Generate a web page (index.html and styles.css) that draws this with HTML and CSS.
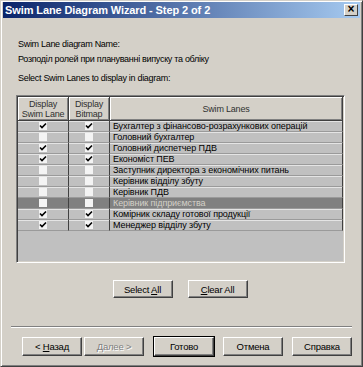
FILE: index.html
```html
<!DOCTYPE html>
<html lang="uk">
<head>
  <meta charset="UTF-8" />
  <title>Swim Lane Diagram Wizard - Step 2 of 2</title>
  <link rel="stylesheet" href="styles.css">
</head>
<body>
  <div class="window">
    <div class="titlebar">
      <span class="title">Swim Lane Diagram Wizard - Step 2 of 2</span>
      <span class="close">&times;</span>
    </div>

    <div class="content">
      <p class="label name-label">Swim Lane diagram Name:</p>
      <p class="label">Розподіл ролей при плануванні випуску та обліку</p>
      <p class="label select-label">Select Swim Lanes to display in diagram:</p>

      <div class="grid">
        <div class="grid-head">
          <div class="hcell">Display<br>Swim Lane</div>
          <div class="hcell">Display<br>Bitmap</div>
          <div class="hcell">Swim Lanes</div>
        </div>
        <div class="grid-body" id="rows"></div>
      </div>

      <div class="mid-buttons">
        <button class="btn"><span>Select <u>A</u>ll</span></button>
        <button class="btn"><span><u>C</u>lear All</span></button>
      </div>

      <div class="separator"></div>

      <div class="footer">
        <div class="pair">
          <button class="btn">&lt; <u>Н</u>азад</button>
          <button class="btn disabled"><u>Д</u>алее &gt;</button>
        </div>
        <button class="btn default">Готово</button>
        <button class="btn">Отмена</button>
        <button class="btn">Справка</button>
      </div>
    </div>
  </div>

  <script>
    const lanes = [
      ['Бухгалтер з фінансово-розрахункових операцій', true, true],
      ['Головний бухгалтер', false, false],
      ['Головний диспетчер ПДВ', true, true],
      ['Економіст ПЕВ', true, true],
      ['Заступник директора з економічних питань', false, false],
      ['Керівник відділу збуту', false, false],
      ['Керівник ПДВ', false, false],
      ['Керівник підприємства', false, false, true],
      ['Комірник складу готової продукції', true, true],
      ['Менеджер відділу збуту', true, true]
    ];

    const check = '<svg viewBox="0 0 8 8" width="8" height="8"><path d="M1 3.5 L3 5.5 L7 1.5" fill="none" stroke="#000" stroke-width="1.6"/></svg>';

    const rows = document.getElementById('rows');
    lanes.forEach(function (lane) {
      const row = document.createElement('div');
      row.className = 'row' + (lane[3] ? ' selected' : '');
      row.innerHTML =
        '<div class="cell box">' + (lane[1] ? '<span class="tick">' + check + '</span>' : '<span class="empty"></span>') + '</div>' +
        '<div class="cell box">' + (lane[2] ? '<span class="tick">' + check + '</span>' : '<span class="empty"></span>') + '</div>' +
        '<div class="cell text">' + lane[0] + '</div>';
      rows.appendChild(row);
    });
  </script>
</body>
</html>
```

FILE: styles.css
```css
* {
  margin: 0;
  padding: 0;
  box-sizing: border-box;
}

body {
  background: #d4d0c8;
  font-family: 'Liberation Sans', Arial, sans-serif;
  font-size: 9px;
  letter-spacing: -0.2px;
  color: #000;
}

.window {
  width: 363px;
  height: 367px;
  background: #d4d0c8;
  border: 1px solid;
  border-color: #d4d0c8 #404040 #404040 #d4d0c8;
  box-shadow: inset 1px 1px 0 #fff, inset -1px -1px 0 #808080;
  padding: 1px 2px 0 2px;
  display: flex;
  flex-direction: column;
}

.titlebar {
  height: 16px;
  background: linear-gradient(to right, #0a246a, #a6caf0);
  display: flex;
  align-items: center;
  justify-content: space-between;
  padding: 0 2px 0 2px;
}

.title {
  color: #fff;
  font-weight: bold;
  font-size: 11px;
  letter-spacing: -0.1px;
}

.close {
  width: 14px;
  height: 12px;
  background: #d4d0c8;
  border: 1px solid;
  border-color: #fff #404040 #404040 #fff;
  font-size: 12px;
  line-height: 9px;
  text-align: center;
  font-weight: bold;
}

.content {
  flex: 1;
  padding: 0 0 0 13px;
}

.label {
  height: 12px;
  line-height: 12px;
  margin-bottom: 3px;
  padding-left: 2px;
  letter-spacing: -0.3px;
}

.name-label {
  margin-top: 20px;
}

.select-label {
  margin-top: 7px;
  margin-bottom: 11px;
}

.grid {
  width: 329px;
  height: 168px;
  background: #c0c0c0;
  border: 1px solid;
  border-color: #808080 #fff #fff #808080;
  box-shadow: inset 1px 1px 0 #404040, inset -1px -1px 0 #d4d0c8;
  padding: 1px;
}

.grid-head,
.row {
  display: grid;
  grid-template-columns: 51px 41px 233px;
}

.hcell {
  height: 24px;
  background: #d4d0c8;
  border-right: 1px solid #404040;
  border-bottom: 1px solid #404040;
  box-shadow: inset 1px 1px 0 #fff, inset -1px -1px 0 #808080;
  display: flex;
  align-items: center;
  justify-content: center;
  text-align: center;
  line-height: 10px;
  color: #303030;
}

.row {
  height: 11px;
}

.cell {
  height: 11px;
  border-right: 1px solid #404040;
  border-bottom: 1px solid #9a9a9a;
  box-shadow: inset 0 1px 0 #e4e4e4;
}

.box {
  display: flex;
  align-items: center;
  justify-content: center;
}

.tick,
.empty {
  width: 8px;
  height: 8px;
  background: #f4f4f4;
  display: flex;
}

.text {
  padding-left: 3px;
  line-height: 10px;
  letter-spacing: -0.1px;
  white-space: nowrap;
  overflow: hidden;
}

.row.selected .cell {
  background: #808080;
  box-shadow: none;
}

.row.selected .text {
  color: #d4d0c8;
}

.mid-buttons {
  display: flex;
  justify-content: center;
  gap: 15px;
  margin-top: 17px;
  padding-right: 16px;
}

.btn {
  width: 60px;
  height: 18px;
  background: #d4d0c8;
  font-family: 'Liberation Sans', Arial, sans-serif;
  font-size: 9.5px;
  letter-spacing: -0.2px;
  color: #000;
  border: 1px solid;
  border-color: #fff #404040 #404040 #fff;
  box-shadow: inset -1px -1px 0 #808080;
}

.footer .btn {
  height: 19px;
}

.btn.disabled {
  color: #808080;
  text-shadow: 1px 1px 0 #fff;
}

.btn.default {
  outline: 1px solid #000;
}

.separator {
  height: 2px;
  margin: 28px 8px 0 -5px;
  border-top: 1px solid #808080;
  border-bottom: 1px solid #fff;
}

.footer {
  display: flex;
  gap: 9px;
  margin-top: 9px;
  padding-left: 6px;
}

.pair {
  display: flex;
  gap: 2px;
  margin-right: 1px;
}
```
